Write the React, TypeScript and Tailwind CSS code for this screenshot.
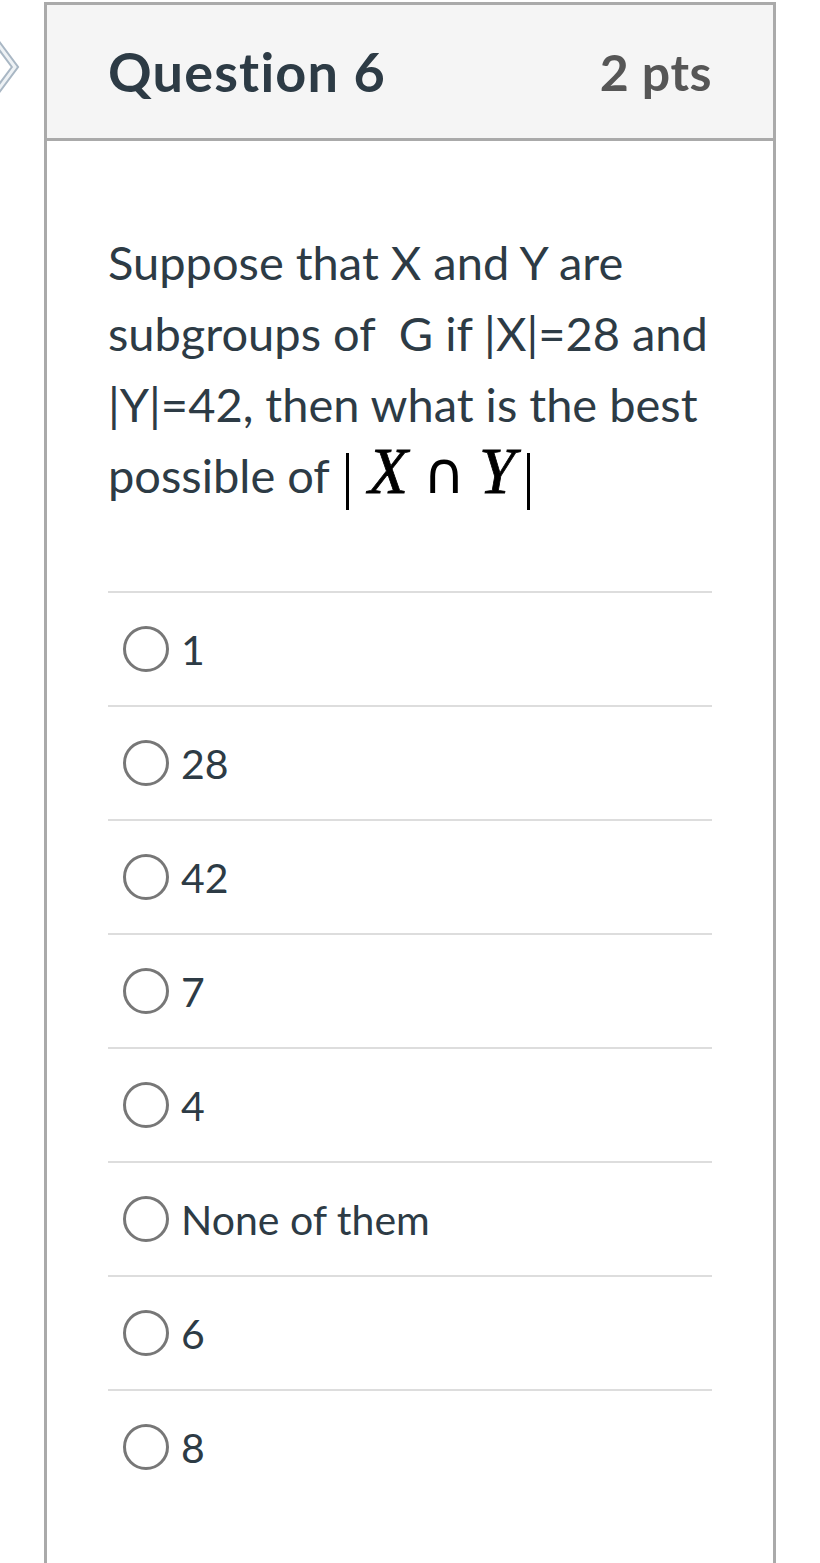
import React from "react";

const options = ["1", "28", "42", "7", "4", "None of them", "6", "8"];

function Radio() {
  return (
    <span className="block w-[46px] h-[46px] rounded-full border-[3px] border-[#777777] bg-white shrink-0" />
  );
}

export default function App() {
  return (
    <div
      className="relative w-[820px] h-[1563px] bg-white overflow-hidden"
      style={{ fontFamily: "Lato, 'Noto Sans', sans-serif" }}
    >
      <svg
        className="absolute left-0 top-[30px]"
        width="24"
        height="76"
        viewBox="0 0 24 76"
      >
        <polyline
          points="-8,6 15,37 -8,68"
          fill="none"
          stroke="#a9b7c4"
          strokeWidth="7"
          strokeLinejoin="miter"
        />
        <polyline
          points="-8,6 15,37 -8,68"
          fill="none"
          stroke="#eef2f5"
          strokeWidth="3"
          strokeLinejoin="miter"
        />
      </svg>
      <div className="ml-[44px] mt-[2px] w-[732px] h-[1561px] border-x-[3px] border-t-[3px] border-[#aaaaaa] flex flex-col">
        <div className="h-[136px] bg-[#f5f5f5] border-b-[3px] border-[#aaaaaa] flex items-center justify-between px-[61px] shrink-0">
          <span className="text-[54px] font-bold text-[#2d3b45] leading-none tracking-[1.2px]">
            Question 6
          </span>
          <span className="text-[50px] font-bold text-[#565656] leading-none tracking-[0.5px]">
            2 pts
          </span>
        </div>
        <div className="px-[61px] pt-[86px]">
          <p className="text-[47px] leading-[71px] text-[#2d3b45]">
            Suppose that X and Y are subgroups of&nbsp; G if |X|=28 and |Y|=42,
            then what is the best possible of{" "}
            <span
              className="inline-block leading-none text-black"
              style={{ fontFamily: "'Liberation Serif', 'DejaVu Serif', serif" }}
            >
              <span className="inline-block w-[3px] h-[57px] bg-black align-[-17px] ml-[5px]" />
              <span className="inline-block w-[54px] ml-[12px] text-center italic text-[65px] leading-[44px] [-webkit-text-stroke:0.8px_black]">
                X
              </span>
              <span
                className="inline-block w-[30px] ml-[8px] text-center font-normal text-[58px] leading-[30px]"
                style={{ fontFamily: "'DejaVu Sans', sans-serif" }}
              >
                ∩
              </span>
              <span className="inline-block w-[44px] ml-[22px] text-center italic text-[65px] leading-[44px] [-webkit-text-stroke:0.8px_black]">
                Y
              </span>
              <span className="inline-block w-[3px] h-[57px] bg-black align-[-17px] ml-[8px]" />
            </span>
          </p>
          <div className="mt-[80px] flex flex-col">
            {options.map((o) => (
              <div key={o} className="border-t-2 border-[#dddddd]">
                <div className="h-[112px] flex items-center gap-[12px] pl-[15px]">
                  <Radio />
                  <span className="text-[41px] text-[#2d3b45] leading-none">
                    {o}
                  </span>
                </div>
              </div>
            ))}
          </div>
        </div>
      </div>
    </div>
  );
}
